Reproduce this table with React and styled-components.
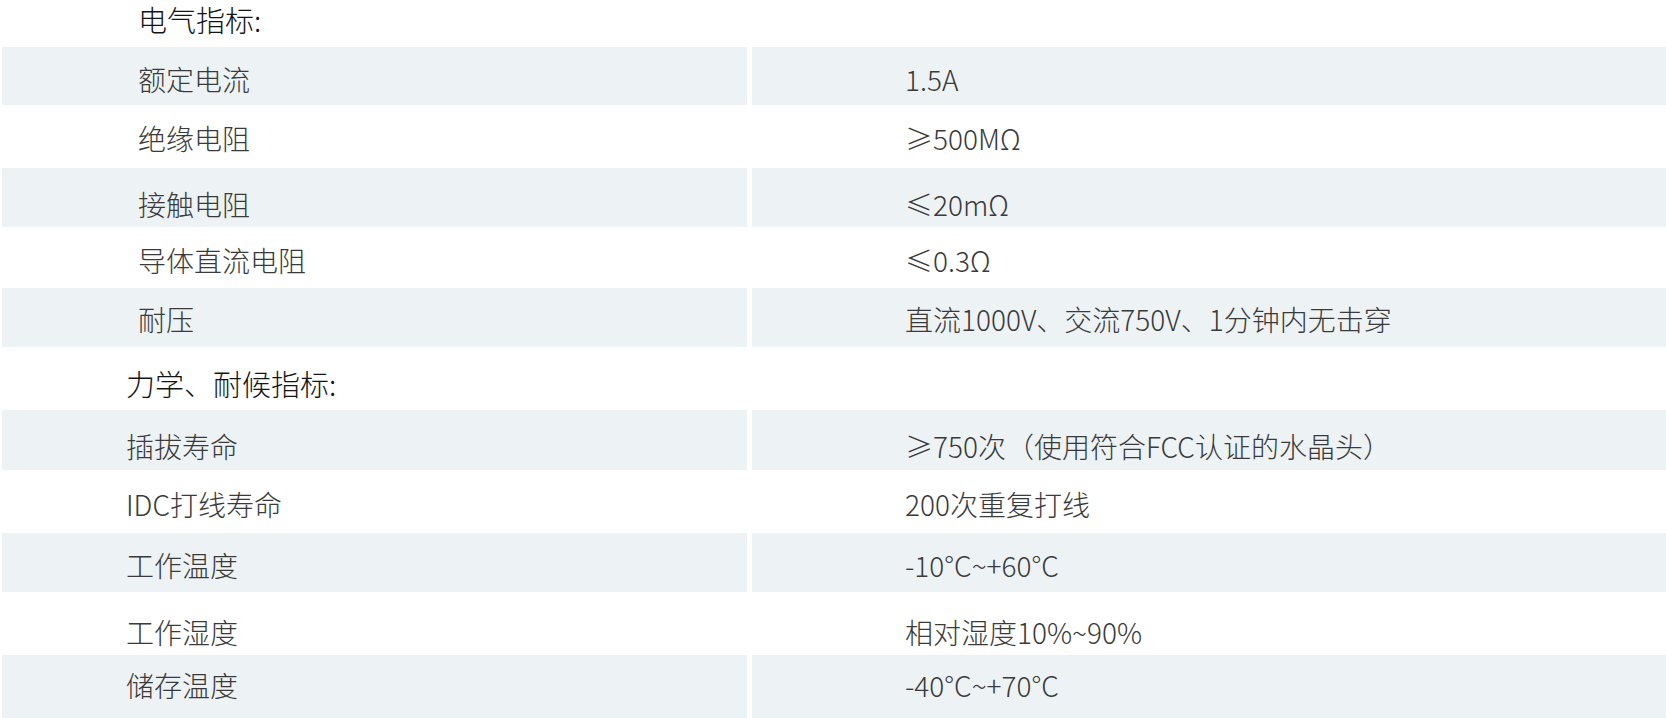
import React from 'react'
import styled, { createGlobalStyle } from 'styled-components'

const sections = [
  {
    title: '电气指标:',
    top: 1,
    height: 47,
    indent: 138,
    rows: [
      { label: '额定电流', value: '1.5A', h: 58, shift: 3 },
      { label: '绝缘电阻', value: '≥500MΩ', h: 63, shift: 1 },
      { label: '接触电阻', value: '≤20mΩ', h: 59, shift: 6 },
      { label: '导体直流电阻', value: '≤0.3Ω', h: 61, shift: 2 },
      { label: '耐压', value: '直流1000V、交流750V、1分钟内无击穿', h: 59, shift: 1 },
    ],
  },
  {
    title: '力学、耐候指标:',
    top: 18,
    height: 63,
    indent: 126,
    rows: [
      { label: '插拔寿命', value: '≥750次（使用符合FCC认证的水晶头）', h: 60, shift: 6 },
      { label: 'IDC打线寿命', value: '200次重复打线', h: 63, shift: 2 },
      { label: '工作温度', value: '-10°C~+60°C', h: 59, shift: 2 },
      { label: '工作湿度', value: '相对湿度10%~90%', h: 63, shift: 8 },
      { label: '储存温度', value: '-40°C~+70°C', h: 63, shift: -2 },
    ],
  },
]

const App = () => {
  return (
    <Sheet>
      <GlobalStyle />
      {sections.map((s) => (
        <Section key={s.title}>
          <Heading $top={s.top} $height={s.height} $indent={s.indent}>{s.title}</Heading>
          {s.rows.map((r, i) => (
            <Row key={r.label} $height={r.h}>
              <Cell $shade={i % 2 === 0} $shift={r.shift} $indent={s.indent - 2}>{r.label}</Cell>
              <Cell $shade={i % 2 === 0} $shift={r.shift} $indent={153}>{r.value}</Cell>
            </Row>
          ))}
        </Section>
      ))}
    </Sheet>
  )
}

export default App

const GlobalStyle = createGlobalStyle`
  html, body {
    margin: 0;
    padding: 0;
    background: #ffffff;
  }
  * {
    box-sizing: border-box;
  }
`

const Sheet = styled.div`
  width: 1666px;
  height: 718px;
  overflow: hidden;
  background: #ffffff;
  font-family: "Noto Sans CJK SC", "Noto Sans", sans-serif;
  display: flex;
  flex-direction: column;
`

const Section = styled.div`
  display: flex;
  flex-direction: column;
`

const Heading = styled.div`
  height: ${(p) => p.$height}px;
  padding-top: ${(p) => p.$top}px;
  padding-left: ${(p) => p.$indent}px;
  font-size: 29px;
  line-height: 36px;
  font-weight: 300;
  color: #141414;
  white-space: nowrap;
`

const Row = styled.div`
  height: ${(p) => p.$height}px;
  display: grid;
  grid-template-columns: 745px 1fr;
  column-gap: 5px;
  margin-left: 2px;
`

const Cell = styled.div`
  display: flex;
  align-items: center;
  padding-left: ${(p) => p.$indent}px;
  padding-top: ${(p) => Math.max(0, p.$shift * 2)}px;
  padding-bottom: ${(p) => Math.max(0, -p.$shift * 2)}px;
  background: ${(p) => (p.$shade ? '#edf2f5' : '#ffffff')};
  font-size: 28px;
  line-height: 30px;
  font-weight: 300;
  color: #3a3a3a;
  white-space: nowrap;
`
